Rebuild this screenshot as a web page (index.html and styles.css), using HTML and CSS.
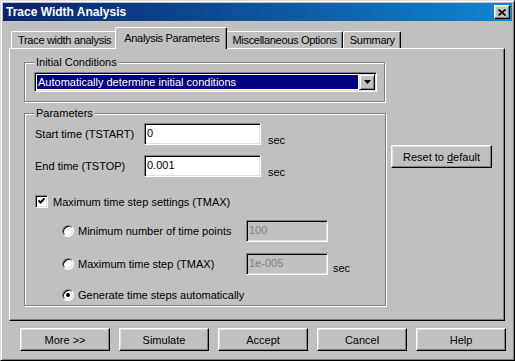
FILE: index.html
```html
<!DOCTYPE html>
<html lang="en">
<head>
    <meta charset="UTF-8">
    <meta name="viewport" content="width=device-width, initial-scale=1.0">
    <title>Trace Width Analysis</title>
    <link rel="stylesheet" href="styles.css">
</head>
<body>
    <div class="window">
        <div class="titlebar">
            <span class="title">Trace Width Analysis</span>
            <button class="close-btn" aria-label="Close">
                <svg width="8" height="7" viewBox="0 0 8 7"><path d="M0.5 0.5L7.5 6.5M7.5 0.5L0.5 6.5" stroke="#000" stroke-width="1.6" fill="none"/></svg>
            </button>
        </div>

        <div class="tabs">
            <div class="tab">Trace width analysis</div>
            <div class="tab active">Analysis Parameters</div>
            <div class="tab">Miscellaneous Options</div>
            <div class="tab">Summary</div>
        </div>

        <div class="panel">
            <div class="groups">
                <fieldset class="group group-init">
                    <legend>Initial Conditions</legend>
                    <div class="combo">
                        <span class="combo-value">Automatically determine initial conditions</span>
                        <span class="combo-arrow">
                            <svg width="7" height="4" viewBox="0 0 7 4"><path d="M0 0h7L3.5 4z" fill="#000"/></svg>
                        </span>
                    </div>
                </fieldset>

                <fieldset class="group group-params">
                    <legend>Parameters</legend>
                    <div class="field-row">
                        <span class="field-label">Start time (TSTART)</span>
                        <span class="textbox">0</span>
                        <span class="unit">sec</span>
                    </div>
                    <div class="field-row row-end">
                        <span class="field-label">End time (TSTOP)</span>
                        <span class="textbox">0.001</span>
                        <span class="unit">sec</span>
                    </div>
                    <div class="check-row">
                        <span class="checkbox">
                            <svg width="7" height="7" viewBox="0 0 7 7"><path d="M0.5 2.5L2.5 4.5L6.5 0.5" stroke="#000" stroke-width="2" fill="none"/></svg>
                        </span>
                        <span>Maximum time step settings (TMAX)</span>
                    </div>
                    <div class="radio-row row-points">
                        <span class="radio"></span>
                        <span class="radio-label">Minimum number of time points</span>
                        <span class="textbox disabled">100</span>
                    </div>
                    <div class="radio-row row-tmax">
                        <span class="radio"></span>
                        <span class="radio-label">Maximum time step (TMAX)</span>
                        <span class="textbox disabled">1e-005</span>
                        <span class="unit unit-small">sec</span>
                    </div>
                    <div class="radio-row row-auto">
                        <span class="radio checked"></span>
                        <span class="radio-label">Generate time steps automatically</span>
                    </div>
                </fieldset>
            </div>

            <div class="side">
                <button class="btn btn-reset">Reset to <u>d</u>efault</button>
            </div>
        </div>

        <div class="actions">
            <button class="btn">More &gt;&gt;</button>
            <button class="btn">Simulate</button>
            <button class="btn">Accept</button>
            <button class="btn">Cancel</button>
            <button class="btn">Help</button>
        </div>
    </div>
</body>
</html>
```

FILE: styles.css
```css
body {
    margin: 0;
    background-color: #c0c0c0;
    font-family: "Liberation Sans", Arial, sans-serif;
    font-size: 11px;
    color: #000;
}
.window {
    width: 515px;
    height: 361px;
    box-sizing: border-box;
    background-color: #c0c0c0;
    border: 1px solid;
    border-color: #dfdfdf #000 #000 #dfdfdf;
    box-shadow: inset 1px 1px #fff, inset -1px -1px #808080;
    padding: 2px;
}

/* title bar */
.titlebar {
    height: 18px;
    display: flex;
    align-items: center;
    justify-content: space-between;
    padding: 0 2px 0 3px;
    background: linear-gradient(to right, #0a246a, #1084d0);
    color: #fff;
    font-weight: bold;
    font-size: 12px;
}
.close-btn {
    width: 16px;
    height: 14px;
    padding: 0;
    display: flex;
    align-items: center;
    justify-content: center;
    background-color: #c0c0c0;
    border: 1px solid;
    border-color: #fff #000 #000 #fff;
    box-shadow: inset -1px -1px #808080, inset 1px 1px #dfdfdf;
}

/* tabs */
.tabs {
    display: flex;
    align-items: flex-end;
    margin: 6px 0 0 6px;
    padding-left: 2px;
    height: 21px;
}
.tab {
    height: 17px;
    box-sizing: border-box;
    padding: 1px 5px 0 6px;
    line-height: 15px;
    letter-spacing: -0.3px;
    border: 1px solid;
    border-bottom: none;
    border-color: #fff #000 #000 #fff;
    border-radius: 2px 2px 0 0;
    box-shadow: inset -1px 0 #808080;
    white-space: nowrap;
}
.tab.active {
    position: relative;
    z-index: 1;
    height: 22px;
    padding: 3px 7px 0 8px;
    margin: 0 -2px -1px;
    background-color: #c0c0c0;
}

/* tab panel */
.panel {
    height: 273px;
    width: 496px;
    box-sizing: border-box;
    margin-left: 6px;
    padding: 7px 0 0 14px;
    display: flex;
    align-items: flex-start;
    border: 1px solid;
    border-color: #fff #000 #000 #fff;
    box-shadow: inset -1px -1px #808080;
}
.groups {
    display: flex;
    flex-direction: column;
    width: 362px;
}
.side {
    margin: 89px 0 0 5px;
}

/* group boxes */
.group {
    margin: 0;
    box-sizing: border-box;
    border: 1px solid #808080;
    box-shadow: inset 1px 1px #fff, 1px 1px #fff;
}
.group legend {
    padding: 0 2px;
    line-height: 13px;
    background-color: #c0c0c0;
}
.group-init {
    width: 361px;
    padding: 0 7px 9px 9px;
}
.group-params {
    width: 362px;
    margin-top: 5px;
    padding: 0 7px 4px 10px;
}
.group-params legend {
    margin-left: -1px;
}

/* combo box */
.combo {
    margin-top: 3px;
    height: 20px;
    box-sizing: border-box;
    display: flex;
    padding: 1px;
    background-color: #fff;
    border: 1px solid;
    border-color: #808080 #fff #fff #808080;
    box-shadow: inset 1px 1px #000, inset -1px -1px #dfdfdf;
}
.combo-value {
    flex: 1;
    margin: 1px;
    padding-left: 1px;
    line-height: 14px;
    background-color: #000080;
    color: #fff;
    white-space: nowrap;
}
.combo-arrow {
    width: 16px;
    height: 16px;
    box-sizing: border-box;
    display: flex;
    align-items: center;
    justify-content: center;
    background-color: #c0c0c0;
    border: 1px solid;
    border-color: #dfdfdf #000 #000 #dfdfdf;
    box-shadow: inset 1px 1px #fff, inset -1px -1px #808080;
}

/* text fields */
.field-row {
    display: flex;
    align-items: flex-start;
    height: 22px;
    margin-top: 3px;
}
.field-row.row-end {
    margin-top: 10px;
}
.field-label {
    width: 109px;
    line-height: 22px;
}
.textbox {
    width: 117px;
    height: 22px;
    box-sizing: border-box;
    padding-left: 2px;
    line-height: 18px;
    background-color: #fff;
    border: 1px solid;
    border-color: #808080 #fff #fff #808080;
    box-shadow: inset 1px 1px #000, inset -1px -1px #dfdfdf;
}
.textbox.disabled {
    width: 82px;
    background-color: #c0c0c0;
    color: #808080;
}
.unit {
    margin: 11px 0 0 7px;
    line-height: 13px;
}
.unit.unit-small {
    margin: 9px 0 0 5px;
}

/* checkbox and radios */
.check-row {
    display: flex;
    align-items: center;
    height: 13px;
    margin-top: 18px;
}
.checkbox {
    width: 13px;
    height: 13px;
    box-sizing: border-box;
    margin-right: 5px;
    display: flex;
    align-items: center;
    justify-content: center;
    background-color: #fff;
    border: 1px solid;
    border-color: #808080 #fff #fff #808080;
    box-shadow: inset 1px 1px #000, inset -1px -1px #dfdfdf;
}
.radio-row {
    display: flex;
    align-items: center;
    height: 22px;
    padding-left: 27px;
}
.radio-row.row-points {
    margin-top: 12px;
}
.radio-row.row-tmax {
    margin-top: 11px;
    align-items: flex-start;
}
.radio-row.row-tmax .radio,
.radio-row.row-tmax .radio-label {
    align-self: center;
}
.radio-row.row-auto {
    margin-top: 13px;
    height: 13px;
}
.radio {
    position: relative;
    width: 12px;
    height: 12px;
    box-sizing: border-box;
    margin-right: 4px;
    border-radius: 50%;
    background-color: #fff;
    border: 1px solid;
    border-color: #808080 #fff #fff #808080;
    box-shadow: inset 1px 1px #000, inset -1px -1px #dfdfdf;
}
.radio.checked::after {
    content: "";
    position: absolute;
    left: 3px;
    top: 3px;
    width: 4px;
    height: 4px;
    border-radius: 50%;
    background-color: #000;
}
.radio-label {
    width: 168px;
}

/* push buttons */
.btn {
    width: 90px;
    height: 23px;
    padding: 0;
    font-family: inherit;
    font-size: 11px;
    color: #000;
    background-color: #c0c0c0;
    border: 1px solid;
    border-color: #fff #000 #000 #fff;
    box-shadow: inset -1px -1px #808080, inset 1px 1px #dfdfdf;
}
.btn-reset {
    width: 101px;
}
.actions {
    display: flex;
    gap: 9px;
    margin: 7px 0 0 17px;
}
```
